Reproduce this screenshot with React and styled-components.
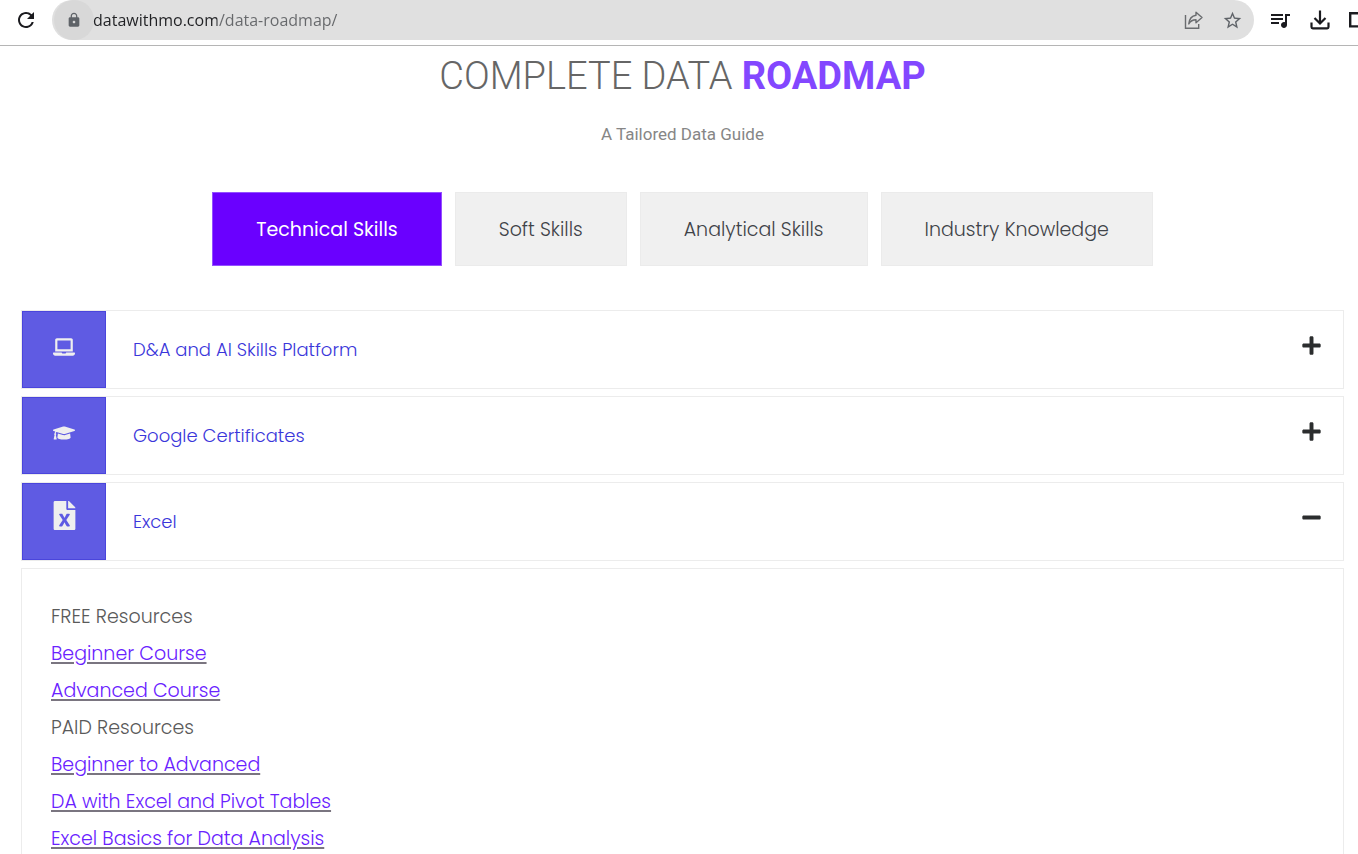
// src/App.jsx
import React, { useState } from "react";
import styled, { createGlobalStyle } from "styled-components";
import { FaLaptop, FaGraduationCap, FaFileExcel, FaPlus, FaMinus } from "react-icons/fa";
import { MdLock, MdRefresh, MdStarBorder, MdQueueMusic } from "react-icons/md";

const GlobalStyle = createGlobalStyle`
  :root {
    --violet: #6a00ff;
    --indigo: #5f5be3;
    --line: #ececec;
  }

  * { box-sizing: border-box; }

  body {
    margin: 0;
    background: #fff;
    font-family: Poppins, Inter, sans-serif;
  }
`;

const Page = styled.div`
  display: flex;
  flex-direction: column;
  height: 100vh;
`;

/* === Browser bar === */
const Bar = styled.header`
  display: flex;
  align-items: flex-start;
  flex: none;
  gap: 14px;
  padding-left: 14px;
  height: 46px;
  overflow: hidden;
  border-bottom: 1px solid #b5b5b5;
`;

const IconBtn = styled.button`
  display: flex;
  align-items: center;
  justify-content: center;
  flex: none;
  width: ${(p) => p.$w || 24}px;
  height: 40px;
  padding: 0;
  border: none;
  background: none;
  color: ${(p) => p.$color || "#1b1b1f"};
  cursor: pointer;
`;

const Address = styled.div`
  display: flex;
  align-items: center;
  flex: 1;
  min-width: 0;
  height: 40px;
  padding: 0 10px 0 2px;
  gap: 14px;
  border-radius: 20px;
  background: #e0e0e0;
`;

const LockBtn = styled(IconBtn)`
  border-radius: 50%;
  background: #d8d8d8;
`;

/* host name dark, path grey */
const UrlInput = styled.input`
  flex: 1;
  min-width: 0;
  height: 32px;
  margin-left: -15px;
  padding: 0;
  border: none;
  outline: none;
  font: 16px/32px "Segoe UI", "Open Sans", sans-serif;
  background: linear-gradient(90deg, #202124 124px, #66686b 124px);
  -webkit-background-clip: text;
  background-clip: text;
  -webkit-text-fill-color: transparent;
`;

const Tools = styled.div`
  display: flex;
  flex: none;
  gap: 16px;
  width: 90px;
  overflow: hidden;
`;

/* === Page content === */
const Content = styled.main`
  flex: 1;
  min-height: 0;
  overflow-y: auto;
  scrollbar-width: none;
  padding: 6px 14px 0 21px;
`;

const Title = styled.h1`
  margin: 0;
  text-align: center;
  font: 300 38px/48px Roboto, sans-serif;
  color: #666;

  strong {
    font-weight: 700;
    color: #8347ff;
  }
`;

const Subtitle = styled.p`
  margin: 22px 0 46px;
  text-align: center;
  font: 17px/24px Roboto, sans-serif;
  color: #868686;
`;

const Tabs = styled.div`
  display: flex;
  flex-wrap: wrap;
  justify-content: center;
  gap: 13px;
  margin-bottom: 44px;
`;

const Tab = styled.button`
  height: 74px;
  padding: 0 43px;
  border: 1px solid ${(p) => (p.$active ? "#9450ff" : "#ebebeb")};
  background: ${(p) => (p.$active ? "var(--violet)" : "#f0f0f0")};
  color: ${(p) => (p.$active ? "#fff" : "#3f4348")};
  font-family: inherit;
  font-size: 19px;
  font-weight: ${(p) => (p.$active ? 400 : 300)};
  cursor: pointer;
`;

const List = styled.div`
  display: flex;
  flex-direction: column;
  gap: 7px;
`;

const Row = styled.button`
  display: flex;
  align-items: stretch;
  width: 100%;
  height: 79px;
  padding: 0;
  border: 1px solid var(--line);
  background: #fff;
  color: #3a36da;
  font-family: inherit;
  font-size: 18px;
  font-weight: 300;
  text-align: left;
  cursor: pointer;
`;

const Tile = styled.span`
  display: flex;
  align-items: flex-end;
  justify-content: center;
  width: 84px;
  padding-bottom: 29px;
  border: 1px solid #4a45dc;
  background: var(--indigo);
  color: #efefef;
`;

const RowLabel = styled.span`
  flex: 1;
  align-self: center;
  padding: 0 0 1px 27px;
`;

const Toggle = styled.span`
  display: flex;
  align-items: center;
  padding: 0 21px 9px 0;
  font-size: 21px;
  color: #2b2d2e;
`;

const Panel = styled.div`
  padding: 29px;
  border: 1px solid var(--line);
  font-size: 19px;
  font-weight: 300;
  line-height: 37px;
  color: #5a5a5a;
`;

const Heading = styled.p`
  margin: 0;
`;

const Links = styled.ul`
  margin: 0;
  padding: 0;
  list-style: none;
`;

const CourseLink = styled.a`
  color: #6a22ff;
  text-decoration: underline 2px #7a7580;
  text-underline-offset: 2px;
`;

const ShareIcon = () => (
  <svg width="20" height="20" viewBox="0 0 20 20" fill="none" stroke="currentColor" strokeWidth="1.4">
    <path d="M1.5 5v13.3h13.2V14" />
    <path d="M12 2.2l6 5.3-6 5.3V9.8C8.8 9.8 6.5 11 4.8 13.9 5.2 9.5 7.6 5.8 12 5.2z" strokeLinejoin="round" />
  </svg>
);

const DownloadIcon = () => (
  <svg width="20" height="20" viewBox="0 0 20 20" fill="none" stroke="currentColor" strokeWidth="2.2">
    <path d="M10 .5V13M4.5 8l5.5 5.5L15.5 8" />
    <path d="M1.5 12.5V17q0 1.3 1.3 1.3h14.4q1.3 0 1.3-1.3v-4.5" />
  </svg>
);

const PanelIcon = () => (
  <svg width="22" height="20" viewBox="0 0 22 20" fill="none" stroke="currentColor" strokeWidth="2.4">
    <path d="M1.2 3.2h19.6v13.2H1.2zM13 3v13" />
  </svg>
);

const tabs = ["Technical Skills", "Soft Skills", "Analytical Skills", "Industry Knowledge"];

const sections = [
  { title: "D&A and AI Skills Platform", icon: FaLaptop, size: 22 },
  { title: "Google Certificates", icon: FaGraduationCap, size: 22 },
  {
    title: "Excel",
    icon: FaFileExcel,
    size: 29,
    groups: [
      { name: "FREE Resources", links: ["Beginner Course", "Advanced Course"] },
      {
        name: "PAID Resources",
        links: ["Beginner to Advanced", "DA with Excel and Pivot Tables", "Excel Basics for Data Analysis"],
      },
    ],
  },
];

function App() {
  const [url, setUrl] = useState("datawithmo.com/data-roadmap/");
  const [tab, setTab] = useState(tabs[0]);
  const [open, setOpen] = useState("Excel");

  return (
    <Page>
      <GlobalStyle />
      <Bar>
        <IconBtn aria-label="Reload"><MdRefresh size={24} /></IconBtn>
        <Address>
          <LockBtn $w={40} $color="#5f6368" aria-label="Site information"><MdLock size={16} /></LockBtn>
          <UrlInput aria-label="Address" value={url} onChange={(e) => setUrl(e.target.value)} spellCheck={false} />
          <IconBtn $color="#6a6c6f" aria-label="Share"><ShareIcon /></IconBtn>
          <IconBtn $color="#5f6368" aria-label="Bookmark"><MdStarBorder size={21} /></IconBtn>
        </Address>
        <Tools>
          <IconBtn aria-label="Media controls"><MdQueueMusic size={24} /></IconBtn>
          <IconBtn aria-label="Downloads"><DownloadIcon /></IconBtn>
          <IconBtn aria-label="Side panel"><PanelIcon /></IconBtn>
        </Tools>
      </Bar>

      <Content>
        <Title>COMPLETE DATA <strong>ROADMAP</strong></Title>
        <Subtitle>A Tailored Data Guide</Subtitle>

        <Tabs role="tablist">
          {tabs.map((t) => (
            <Tab key={t} role="tab" aria-selected={t === tab} $active={t === tab} onClick={() => setTab(t)}>
              {t}
            </Tab>
          ))}
        </Tabs>

        <List>
          {sections.map(({ title, icon: Icon, size, groups }) => (
            <React.Fragment key={title}>
              <Row aria-expanded={open === title} onClick={() => setOpen(open === title ? "" : title)}>
                <Tile><Icon size={size} /></Tile>
                <RowLabel>{title}</RowLabel>
                <Toggle>{open === title ? <FaMinus /> : <FaPlus />}</Toggle>
              </Row>
              {open === title && groups && (
                <Panel>
                  {groups.map((g) => (
                    <React.Fragment key={g.name}>
                      <Heading>{g.name}</Heading>
                      <Links>
                        {g.links.map((l) => (
                          <li key={l}><CourseLink href="#">{l}</CourseLink></li>
                        ))}
                      </Links>
                    </React.Fragment>
                  ))}
                </Panel>
              )}
            </React.Fragment>
          ))}
        </List>
      </Content>
    </Page>
  );
}

export default App;
